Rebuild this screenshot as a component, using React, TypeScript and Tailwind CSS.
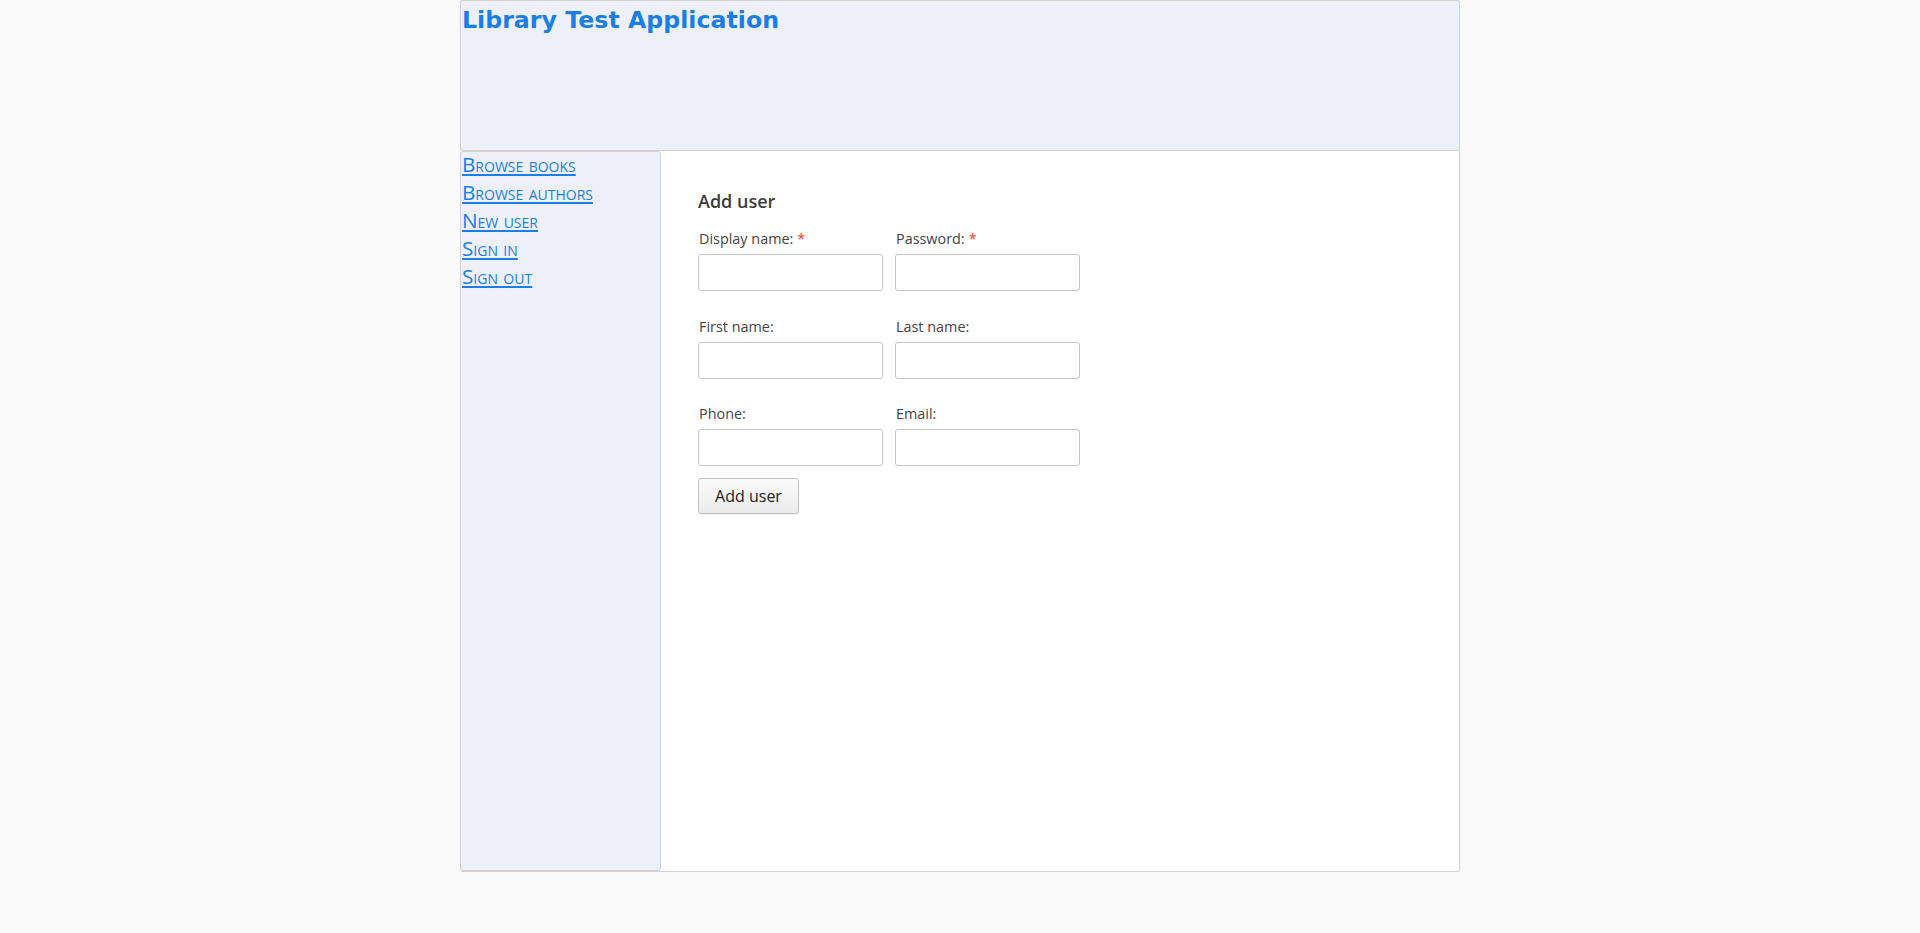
const navLinks = ["Browse books", "Browse authors", "New user", "Sign in", "Sign out"];

function Field({ label, required }: { label: string; required?: boolean }) {
  return (
    <div className="flex w-[185px] flex-col">
      <label className="h-[18px] pl-px text-[14.4px] leading-[18px] text-[#444]">
        {label}
        {required && <span className="ml-1 text-[#e8412c]">*</span>}
      </label>
      <input
        type="text"
        className="mt-[6px] h-[37px] w-full rounded-[3px] border border-[#c4c4c4] bg-white px-2 outline-none"
      />
    </div>
  );
}

function App() {
  return (
    <div className="min-h-screen bg-[#f9f9f9] font-['Open_Sans',sans-serif]">
      <div className="mx-auto w-[1000px]">
        <header className="h-[151px] rounded-[3px] border border-[#d2d2d2] bg-[#edf0f8] px-px shadow-[0_0_2px_rgba(0,0,0,0.08)]">
          <h1 className="font-['DejaVu_Sans',sans-serif] text-[23.7px] leading-[39px] font-bold text-[#1a7ee6]">
            Library Test Application
          </h1>
        </header>

        <div className="flex h-[721px] rounded-b-[3px] border-r border-b border-[#d2d2d2] bg-white">
          <nav className="w-[201px] rounded-[3px] border border-[#d2d2d2] bg-[#edf0f8] px-px">
            <div className="-mt-[2px] flex flex-col">
              {navLinks.map((link) => (
                <a
                  key={link}
                  href="#"
                  className="text-[20.7px] leading-[28px] text-[#1a7ee6] underline [font-variant:small-caps]"
                >
                  {link}
                </a>
              ))}
            </div>
          </nav>

          <main className="flex-1 pt-[38px] pl-[37px]">
            <h2 className="text-[18px] leading-[24px] font-semibold text-[#3c3c3c]">Add user</h2>
            <form className="mt-[17px] flex flex-col gap-[27px]" onSubmit={(e) => e.preventDefault()}>
              <div className="flex gap-[12px]">
                <Field label="Display name:" required />
                <Field label="Password:" required />
              </div>
              <div className="flex gap-[12px]">
                <Field label="First name:" />
                <Field label="Last name:" />
              </div>
              <div className="-mt-px flex gap-[12px]">
                <Field label="Phone:" />
                <Field label="Email:" />
              </div>
            </form>
            <button className="mt-[12px] h-[36px] w-[101px] rounded-[3px] border border-[#c2c2c2] bg-gradient-to-b from-[#fafafa] to-[#ececec] text-[16px] text-[#222] shadow-[0_1px_1px_rgba(0,0,0,0.06)]">
              Add user
            </button>
          </main>
        </div>
      </div>
    </div>
  );
}

export default App;
